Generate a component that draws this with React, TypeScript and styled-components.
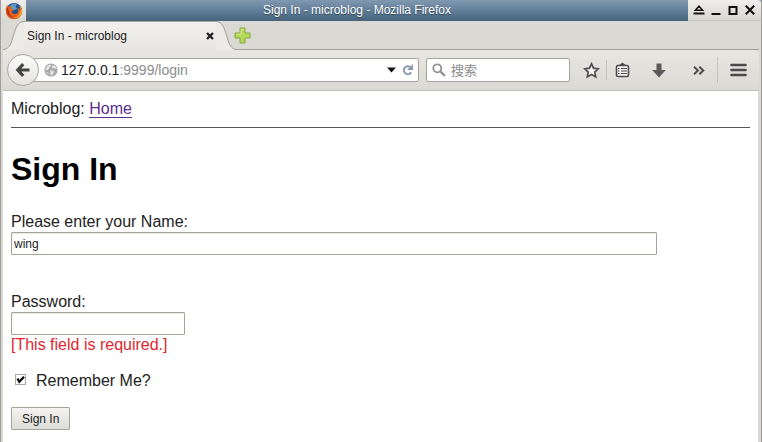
import React, { useState } from "react";
import styled, { createGlobalStyle } from "styled-components";

const GlobalStyle = createGlobalStyle`
  *, *::before, *::after { box-sizing: border-box; }
  body {
    margin: 0;
    background: #fff;
    color: #222;
    font-family: "Liberation Sans", "Noto Sans CJK SC", sans-serif;
    font-size: 16px;
    line-height: 20px;
  }
  button, input { font-family: inherit; color: inherit; }
`;

const BrowserWindow = styled.div`
  display: flex;
  flex-direction: column;
  min-height: 100vh;
  background: #dad9d4;
  border-left: 1px solid #a09e9a;
  border-right: 1px solid #a09e9a;
`;

const TitleBar = styled.header`
  display: flex;
  height: 21px;
  background: linear-gradient(#8199b0, #64809a 45%, #46637c);
`;

const AppBadge = styled.span`
  display: flex;
  flex: none;
  align-items: center;
  justify-content: center;
  width: 25px;
  background: linear-gradient(#efeeec, #d8d7d2);
`;

const WindowTitle = styled.span`
  flex: 1;
  color: #fff;
  font-size: 12px;
  line-height: 20px;
  text-align: center;
  text-shadow: 0 1px 1px #30475a;
  white-space: nowrap;
  overflow: hidden;
`;

const WindowControls = styled.div`
  display: flex;
  flex: none;
  align-items: center;
  gap: 3px;
  padding: 0 4px;
  background: linear-gradient(#efeeec, #d8d7d2);
  border-bottom: 1px solid #c6c5bf;
  border-top-right-radius: 3px;
`;

const IconButton = styled.button<{ $width: number }>`
  display: flex;
  flex: none;
  align-items: center;
  justify-content: center;
  width: ${(p) => p.$width}px;
  padding: 0;
  border: 0;
  background: none;
  color: #4a4a4a;
  cursor: pointer;
`;

const TabStrip = styled.div`
  display: flex;
  height: 29px;
  margin: 0 2px;
  background: linear-gradient(#a19f99, #a19f99) bottom / 100% 1px no-repeat, #dad9d4;
`;

const TabEdge = styled.svg`
  display: block;
  flex: none;
`;

const Tab = styled.div`
  display: flex;
  align-items: center;
  width: 192px;
  height: 29px;
  padding-left: 3px;
  border-top: 1px solid #a5a39e;
  background: linear-gradient(#f2f1ef, #e7e6e2);
`;

const TabTitle = styled.span`
  flex: 1;
  font-size: 12px;
  line-height: 28px;
  white-space: nowrap;
`;

const NavBar = styled.nav`
  display: flex;
  align-items: center;
  height: 41px;
  padding-left: 4px;
  margin: 0 2px;
  background: linear-gradient(#e7e6e2, #dad9d4);
  border-bottom: 1px solid #bebdb7;
`;

const BackButton = styled.button`
  z-index: 1;
  display: flex;
  flex: none;
  align-items: center;
  justify-content: center;
  width: 32px;
  height: 32px;
  padding: 0;
  border: 1px solid #aaa8a3;
  border-radius: 50%;
  background: linear-gradient(#fbfbfa, #e4e3df);
  cursor: pointer;
`;

const AddressBar = styled.div`
  display: flex;
  flex: 1;
  align-items: center;
  min-width: 0;
  height: 24px;
  margin-left: -8px;
  padding-left: 12px;
  border: 1px solid #a5a39e;
  border-radius: 2px;
  background: #fff;
`;

const Address = styled.span`
  flex: 1;
  padding-left: 3px;
  color: #8c8c8c;
  font-size: 14px;
  white-space: nowrap;
  overflow: hidden;
`;

const Host = styled.span`
  color: #222;
`;

const SearchBox = styled.label`
  display: flex;
  flex: none;
  align-items: center;
  gap: 5px;
  width: 144px;
  height: 24px;
  margin: 0 7px;
  padding: 0 5px;
  border: 1px solid #a5a39e;
  border-radius: 2px;
  background: #fff;
`;

const SearchInput = styled.input`
  flex: 1;
  min-width: 0;
  padding: 0;
  border: 0;
  outline: 0;
  background: none;
  font-size: 13px;
  &::placeholder { color: #8c8c8c; opacity: 1; }
`;

const Divider = styled.span<{ $height: number }>`
  flex: none;
  width: 1px;
  height: ${(p) => p.$height}px;
  background: #c3c2bd;
`;

const Page = styled.main`
  flex: 1;
  margin: 0 3px 0 2px;
  padding: 8px;
  background: #fff;
`;

const HomeLink = styled.a`
  color: #5c2d91;
  text-decoration: none;
  border-bottom: 1px solid #5c2d91;
`;

const Rule = styled.hr`
  margin: 8px 0 0;
  border: 0;
  border-top: 1px solid #555;
`;

const Heading = styled.h1`
  margin: 21px 0 23px;
  color: #000;
  font-size: 32px;
  line-height: 40px;
`;

const Field = styled.div`
  display: flex;
  flex-direction: column;
  align-items: flex-start;
`;

const TextInput = styled.input<{ $wide?: boolean }>`
  width: ${(p) => (p.$wide ? "646px" : "174px")};
  max-width: 100%;
  height: 23px;
  padding: 1px 2px;
  border: 1px solid #a5a29b;
  border-radius: 1px;
  background: #fff;
  box-shadow: inset 0 1px 0 #eceae7;
  font-size: 12px;
`;

const FormBody = styled.form`
  display: grid;
  gap: 16px;
`;

const Fields = styled.div`
  display: grid;
  gap: 37px;
`;

const ErrorText = styled.span`
  color: #e0262f;
`;

const RememberRow = styled.label`
  display: flex;
  align-items: flex-start;
  gap: 10px;
  padding-left: 4px;
`;

const CheckBox = styled.input`
  appearance: none;
  flex: none;
  width: 11px;
  height: 11px;
  margin: 3px 0 0;
  border: 1px solid #aaa7a0;
  background: #fff;
  &:checked {
    background: #fff url("data:image/svg+xml,%3Csvg xmlns='http://www.w3.org/2000/svg' viewBox='0 0 9 9'%3E%3Cpath d='M1.4 3.5 3.3 6.8 8 1.7' fill='none' stroke='%23111' stroke-width='2.3'/%3E%3C/svg%3E") center / 9px 9px no-repeat;
  }
`;

const SubmitButton = styled.button`
  justify-self: start;
  height: 23px;
  padding: 0 10px;
  border: 1px solid #a5a29b;
  border-radius: 1px;
  background: linear-gradient(#f4f3f1, #dddcd8);
  font-size: 12px;
  line-height: 20px;
`;

function FirefoxLogo() {
  return (
    <svg width="18" height="18" viewBox="0 0 18 18" aria-hidden="true">
      <circle cx="9" cy="9" r="8" fill="#274f88" />
      <path d="M5 3.5Q8 .8 12 2.2L10.5 4 12 6.8 8.6 8.5 5.5 6.5Z" fill="#5d9bce" />
      <path d="M2 3.3 4 4.7Q5.4 3.6 7 4.3L5.8 6.6 8.8 7.5 7 9.2Q7.2 12 10.1 12 13 11.6 13.3 8.4L12.3 5.4Q15 6.3 15 9.8L15.8 6 14.2 2.9Q17.7 6 17.1 10 16 17 9 17.2 2 17 1 10.5.4 6.4 2 3.3Z" fill="#e3631c" />
      <path d="M14.2 3.2Q18 7.4 16 12 13.8 16.6 8.4 15.9 13.5 15.2 14.8 11.2L15.6 7Z" fill="#f6b531" />
      <path d="M2.1 5.2Q.8 10 3.7 13.4 6.2 16.1 9.8 15.4 5.4 14.6 4.2 11.1L3.4 7Z" fill="#b93216" />
    </svg>
  );
}

function GlobeIcon() {
  return (
    <svg width="14" height="14" viewBox="0 0 14 14" aria-hidden="true">
      <circle cx="7" cy="7" r="6.6" fill="#a9a9a9" />
      <path d="M1.2 6.2 3.6 2.5 6.2 1.6 7.2 3.1 5.2 4.4 5 6.1 3 7.2ZM8.2 2.6 10.8 2.4 12.8 5.7 11.1 5.9 9.7 4.7 8 5.4ZM6.2 7.2 9.4 7.7 10.1 9.3 7.9 12.6 6.6 11.6 6.2 9.4ZM2 9.1 4.2 9.6 4.8 12.1Z" fill="#e5e5e5" />
    </svg>
  );
}

export default function App() {
  const [name, setName] = useState("wing");
  const [password, setPassword] = useState("");
  const [remember, setRemember] = useState(true);

  return (
    <>
      <GlobalStyle />
      <BrowserWindow>
        <TitleBar>
          <AppBadge><FirefoxLogo /></AppBadge>
          <WindowTitle>Sign In - microblog - Mozilla Firefox</WindowTitle>
          <WindowControls>
            <IconButton $width={14} aria-label="Shade">
              <svg width="12" height="12" viewBox="0 0 12 12"><path d="M6 2.2 9.6 6.2H2.4Z" fill="none" stroke="#111" strokeWidth="1.5" /><path d="M.5 9.5H11.5" stroke="#111" strokeWidth="2" /></svg>
            </IconButton>
            <IconButton $width={14} aria-label="Minimize">
              <svg width="10" height="14" viewBox="0 0 10 14"><path d="M.5 11H9.5" stroke="#111" strokeWidth="2" /></svg>
            </IconButton>
            <IconButton $width={14} aria-label="Maximize">
              <svg width="10" height="10" viewBox="0 0 10 10"><path d="M1.5 2H8.5V9H1.5Z" fill="none" stroke="#111" strokeWidth="2" /></svg>
            </IconButton>
            <IconButton $width={14} aria-label="Close">
              <svg width="10" height="10" viewBox="0 0 10 10"><path d="M.8.8 9.2 9.2M9.2.8.8 9.2" stroke="#111" strokeWidth="2" /></svg>
            </IconButton>
          </WindowControls>
        </TitleBar>

        <TabStrip>
          <TabEdge width="21" height="29" viewBox="0 0 21 29" aria-hidden="true">
            <path d="M0 28.5C13 28.5 8 .5 21 .5V29H0Z" fill="#ecebe8" />
            <path d="M0 28.5C13 28.5 8 .5 21 .5" fill="none" stroke="#a19f99" />
          </TabEdge>
          <Tab>
            <TabTitle>Sign In - microblog</TabTitle>
            <IconButton $width={12} aria-label="Close tab">
              <svg width="8" height="8" viewBox="0 0 8 8"><path d="M1 1 7 7M7 1 1 7" stroke="#222" strokeWidth="2.4" /></svg>
            </IconButton>
          </Tab>
          <TabEdge width="21" height="29" viewBox="0 0 21 29" aria-hidden="true">
            <path d="M21 28.5C8 28.5 13 .5 0 .5V29H21Z" fill="#ecebe8" />
            <path d="M21 28.5C8 28.5 13 .5 0 .5" fill="none" stroke="#a19f99" />
          </TabEdge>
          <IconButton $width={10} aria-label="New tab">
            <svg width="17" height="17" viewBox="0 0 17 17" overflow="visible"><path d="M6 1H11V6H16V11H11V16H6V11H1V6H6Z" fill="#b4d957" stroke="#83a83a" strokeLinejoin="round" /><path d="M7 2.5H10M2.5 7.2H7.2V3" fill="none" stroke="#d6eb93" /></svg>
          </IconButton>
        </TabStrip>

        <NavBar aria-label="Browser">
          <BackButton aria-label="Back">
            <svg width="16" height="16" viewBox="0 0 16 16"><path d="M8.2 2.2 2.8 8 8.2 13.8M3.5 8H14.5" fill="none" stroke="#444" strokeWidth="3.2" /></svg>
          </BackButton>
          <AddressBar>
            <GlobeIcon />
            <Address><Host>127.0.0.1</Host>:9999/login</Address>
            <IconButton $width={12} aria-label="Show history">
              <svg width="9" height="6" viewBox="0 0 9 6"><path d="M0 .5H9L4.5 5.5Z" fill="#111" /></svg>
            </IconButton>
            <IconButton $width={21} aria-label="Reload">
              <svg width="12" height="12" viewBox="0 0 12 12"><path d="M8.3 3A4 4 0 1 0 9.2 8.4" fill="none" stroke="#8f9bab" strokeWidth="2" /><path d="M11 0V6H5Z" fill="#8f9bab" /></svg>
            </IconButton>
          </AddressBar>
          <SearchBox>
            <svg width="14" height="14" viewBox="0 0 14 14" aria-hidden="true"><circle cx="5.3" cy="5.3" r="4" fill="none" stroke="#929292" strokeWidth="1.8" /><path d="M8.3 8.3 13 13" stroke="#929292" strokeWidth="2.4" /></svg>
            <SearchInput placeholder="搜索" aria-label="搜索" />
          </SearchBox>
          <IconButton $width={29} aria-label="Bookmark this page">
            <svg width="17" height="17" viewBox="0 0 17 17"><path d="M8.5 1.8 10.5 6.2 15.3 6.8 11.8 10.1 12.7 14.9 8.5 12.5 4.3 14.9 5.2 10.1 1.7 6.8 6.5 6.2Z" fill="#f4f3f1" stroke="#4d4d4d" strokeWidth="1.7" /></svg>
          </IconButton>
          <Divider $height={20} />
          <IconButton $width={30} aria-label="Bookmarks">
            <svg width="15" height="16" viewBox="0 0 15 16"><rect x="1.5" y="3.5" width="12" height="11" rx="1.5" fill="#f4f3f1" stroke="#4d4d4d" strokeWidth="1.6" /><path d="M4 3.3 7.5.6 11 3.3Z" fill="#4d4d4d" /><path d="M3 6.5H4.5M6 6.5H12M3 9H4.5M6 9H12M3 11.5H4.5M6 11.5H12" stroke="#4d4d4d" strokeWidth="1.2" /></svg>
          </IconButton>
          <IconButton $width={44} aria-label="Downloads">
            <svg width="14" height="15" viewBox="0 0 14 15"><path d="M4.5.5H9.5V7H13.8L7 14.5.2 7H4.5Z" fill="#5a5a5a" /></svg>
          </IconButton>
          <IconButton $width={36} aria-label="More tools">
            <svg width="12" height="9" viewBox="0 0 12 9"><path d="M1 .7 5 4.5 1 8.3M6.3.7 10.3 4.5 6.3 8.3" fill="none" stroke="#4d4d4d" strokeWidth="2" /></svg>
          </IconButton>
          <Divider $height={26} />
          <IconButton $width={41} aria-label="Open menu">
            <svg width="17" height="14" viewBox="0 0 17 14"><path d="M1.5 2H15.5M1.5 7H15.5M1.5 12H15.5" stroke="#4a4a4a" strokeWidth="2.6" strokeLinecap="round" /></svg>
          </IconButton>
        </NavBar>

        <Page>
          <div>Microblog: <HomeLink href="#home">Home</HomeLink></div>
          <Rule />
          <Heading>Sign In</Heading>
          <FormBody onSubmit={(e) => e.preventDefault()}>
            <Fields>
              <Field>
                <label htmlFor="name">Please enter your Name:</label>
                <TextInput id="name" $wide value={name} onChange={(e) => setName(e.target.value)} />
              </Field>
              <Field>
                <label htmlFor="password">Password:</label>
                <TextInput id="password" type="password" aria-describedby="password-error" value={password} onChange={(e) => setPassword(e.target.value)} />
                <ErrorText id="password-error">[This field is required.]</ErrorText>
              </Field>
            </Fields>
            <RememberRow>
              <CheckBox type="checkbox" checked={remember} onChange={(e) => setRemember(e.target.checked)} />
              Remember Me?
            </RememberRow>
            <SubmitButton type="submit">Sign In</SubmitButton>
          </FormBody>
        </Page>
      </BrowserWindow>
    </>
  );
}
